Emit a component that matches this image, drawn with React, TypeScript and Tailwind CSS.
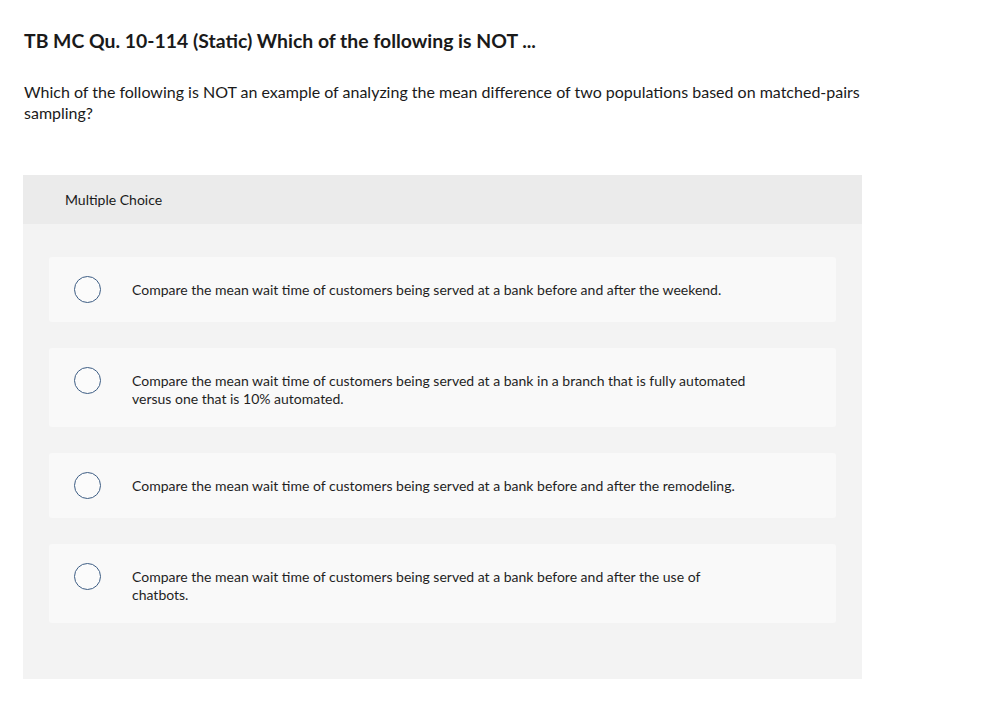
const options = [
  "Compare the mean wait time of customers being served at a bank before and after the weekend.",
  "Compare the mean wait time of customers being served at a bank in a branch that is fully automated versus one that is 10% automated.",
  "Compare the mean wait time of customers being served at a bank before and after the remodeling.",
  "Compare the mean wait time of customers being served at a bank before and after the use of chatbots.",
];

function OptionCard({ text }: { text: string }) {
  return (
    <div className="flex items-start rounded-[3px] bg-[#f9f9f9] py-[19px] pl-[25px] pr-[40px]">
      <span className="h-[27px] w-[27px] shrink-0 rounded-full border-[1.5px] border-[#3d5d84] bg-[#fbfbfb]" />
      <p className="mt-[5px] ml-[31px] max-w-[620px] text-[14px] leading-[18px] text-[#1f1f1f]">{text}</p>
    </div>
  );
}

export default function App() {
  return (
    <div className="min-h-[705px] bg-white px-[24px] pt-[29px] font-['Lato',sans-serif] text-[#1a1a1a]">
      <h1 className="text-[19.4px] font-bold leading-[24px]">
        TB MC Qu. 10-114 (Static) Which of the following is NOT ...
      </h1>
      <p className="mt-[28px] max-w-[840px] text-[16px] leading-[21px]">
        Which of the following is NOT an example of analyzing the mean difference of two populations based on
        matched-pairs sampling?
      </p>

      <div className="mt-[52px] w-[839px] -ml-px bg-[#f3f3f3]">
        <div className="flex h-[49px] items-center bg-[#ebebeb] pl-[42px] text-[14px]">Multiple Choice</div>
        <div className="flex flex-col gap-[26px] px-[26px] pt-[33px] pb-[56px]">
          {options.map((o) => (
            <OptionCard key={o} text={o} />
          ))}
        </div>
      </div>
    </div>
  );
}
